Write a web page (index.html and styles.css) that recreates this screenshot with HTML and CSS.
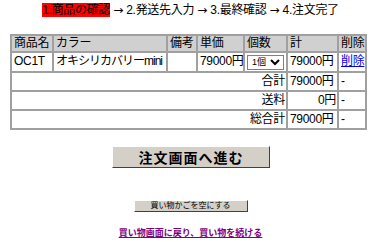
FILE: index.html
```html
<!DOCTYPE html>
<html lang="ja">
<head>
  <meta charset="UTF-8" />
  <title>買い物かご</title>
  <link rel="stylesheet" href="styles.css">
</head>
<body>

<p class="steps"><span class="current">1.商品の確認</span> <span class="arrow">→</span> 2.発送先入力 <span class="arrow">→</span> 3.最終確認 <span class="arrow">→</span> 4.注文完了</p>

<table class="cart">
  <colgroup>
    <col class="c-code">
    <col class="c-color">
    <col class="c-note">
    <col class="c-price">
    <col class="c-qty">
    <col class="c-sum">
    <col class="c-del">
  </colgroup>
  <tr>
    <th>商品名</th>
    <th>カラー</th>
    <th>備考</th>
    <th>単価</th>
    <th>個数</th>
    <th>計</th>
    <th>削除</th>
  </tr>
  <tr>
    <td>OC1T</td>
    <td class="name">オキシリカバリーmini</td>
    <td></td>
    <td>79000円</td>
    <td>
      <select class="qty">
        <option>1個</option>
        <option>2個</option>
        <option>3個</option>
      </select>
    </td>
    <td>79000円</td>
    <td><a href="#">削除</a></td>
  </tr>
  <tr>
    <td colspan="5" class="label">合計</td>
    <td>79000円</td>
    <td>-</td>
  </tr>
  <tr>
    <td colspan="5" class="label">送料</td>
    <td class="num">0円</td>
    <td>-</td>
  </tr>
  <tr>
    <td colspan="5" class="label">総合計</td>
    <td>79000円</td>
    <td>-</td>
  </tr>
</table>

<div class="actions">
  <button class="btn-order" type="button">注文画面へ進む</button>
  <button class="btn-clear" type="button">買い物かごを空にする</button>
  <a class="back" href="#">買い物画面に戻り、買い物を続ける</a>
</div>

</body>
</html>
```

FILE: styles.css
```css
body {
  margin: 0;
  padding: 3px 0 0;
  background: #fff;
  color: #000;
  font-family: "Liberation Sans", "Noto Sans CJK JP", sans-serif;
  font-size: 12px;
}

.steps {
  margin: 0;
  text-align: center;
  font-size: 12px;
  line-height: 15px;
  letter-spacing: -0.3px;
}

.steps .current {
  background: #ff0000;
}

.steps .arrow {
  font-family: "DejaVu Sans", sans-serif;
  font-size: 12px;
  letter-spacing: 0;
}

/* カート */
.cart {
  margin: 16px 0 0 10px;
  width: 357px;
  table-layout: fixed;
  border-collapse: collapse;
  border: 2px solid #a0a0a0;
  font-size: 12px;
  letter-spacing: -0.3px;
}

.cart th,
.cart td {
  border: 2px solid #a0a0a0;
  padding: 1px 1px 1px 2px;
  height: 15px;
  line-height: 15px;
  text-align: left;
  font-weight: normal;
  white-space: nowrap;
  overflow: hidden;
}

.cart th {
  background: #d0d0d0;
  padding: 0 1px 0 2px;
}

.cart td.name {
  letter-spacing: -1px;
}

.cart td.label,
.cart td.num {
  text-align: right;
}

.cart a {
  color: #0000ee;
}

.c-code { width: 42px; }
.c-color { width: 114px; }
.c-note { width: 30px; }
.c-price { width: 47px; }
.c-qty { width: 43px; }
.c-sum { width: 51px; }

.qty {
  font-size: 9px;
  width: 37px;
  height: 15px;
  padding: 0;
  border: 1px solid #808080;
  background: #fff;
  font-family: inherit;
}

.actions {
  display: flex;
  flex-direction: column;
  align-items: center;
  margin-top: 16px;
}

.btn-order {
  width: 158px;
  height: 22px;
  margin-left: 1px;
  background: #d4d0c8;
  border: 1px solid;
  border-color: #fff #404040 #404040 #fff;
  font-family: inherit;
  font-size: 14px;
  font-weight: bold;
  letter-spacing: 1px;
  padding: 0;
}

.btn-clear {
  margin-top: 32px;
  width: 114px;
  height: 12px;
  background: #d4d0c8;
  border: 1px solid;
  border-color: #fff #404040 #404040 #fff;
  font-family: inherit;
  font-size: 8px;
  line-height: 10px;
  padding: 0;
}

.back {
  margin-top: 16px;
  color: #800080;
  font-size: 9px;
  line-height: 11px;
  font-weight: bold;
}
```
